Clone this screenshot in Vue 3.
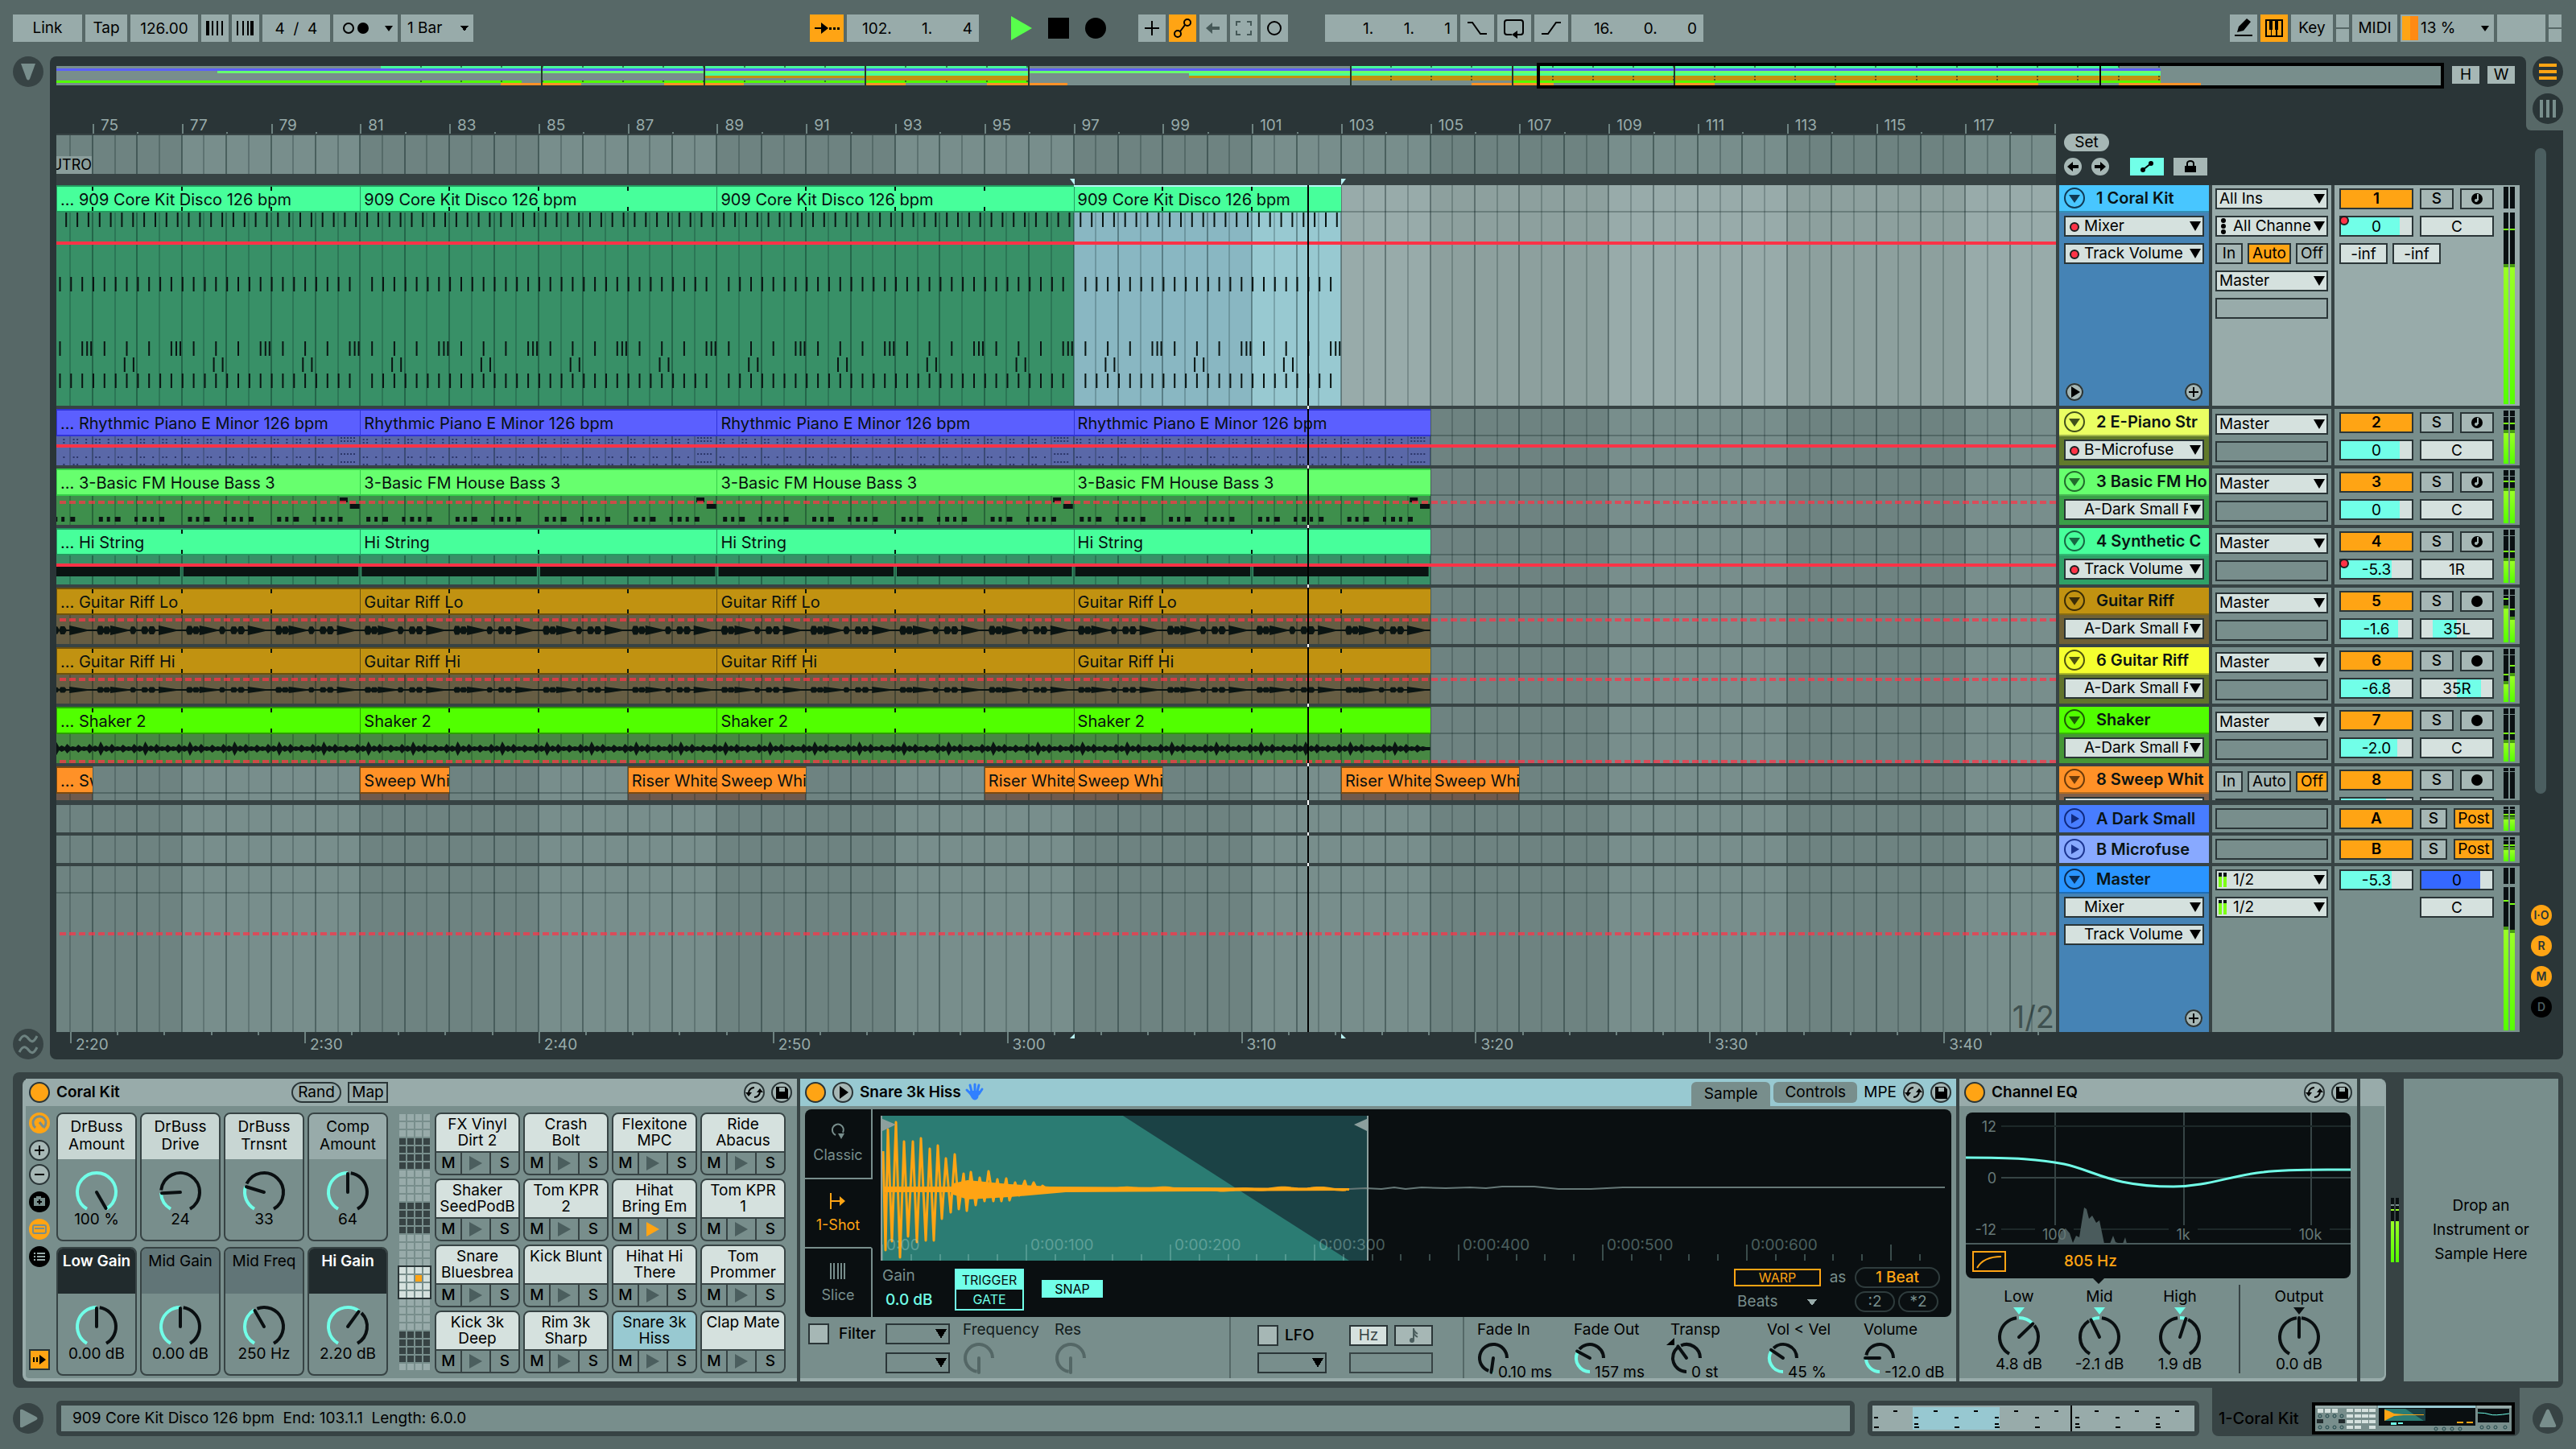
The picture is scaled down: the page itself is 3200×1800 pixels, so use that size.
<template>
    <div class="live">
        <header class="toolbar">
            <div class="group tempo-group">
                <button class="tb">Link</button>
                <button class="tb tap">Tap</button>
                <input class="tb tempo" type="text" value="126.00" aria-label="Tempo">
                <button class="tb nudge" aria-label="Nudge down">
                    <svg width="24" height="20" viewBox="0 0 24 20"><path d="M1 1h4v18H1zM8 1h2v18H8zM14 1h2v18h-2zM20 1h2v18h-2z" /></svg>
                </button>
                <button class="tb nudge" aria-label="Nudge up">
                    <svg width="24" height="20" viewBox="0 0 24 20"><path d="M1 1h2v18H1zM8 1h2v18H8zM14 1h2v18h-2zM18 1h4v18h-4z" /></svg>
                </button>
                <input class="tb signature" type="text" value="4  /  4" aria-label="Time signature">
                <button class="tb metronome" aria-label="Metronome">
                    <svg width="60" height="20" viewBox="0 0 60 20">
                        <circle cx="9" cy="10" r="6" fill="none" stroke="#000" stroke-width="2" />
                        <circle cx="27" cy="10" r="7" />
                        <path d="M54 7h10l-5 7z" />
                    </svg>
                </button>
                <select class="tb quantize" aria-label="Quantization">
                    <option>1 Bar</option>
                </select>
            </div>
            <div class="group transport">
                <button class="tb wide on" aria-label="Follow">
                    <svg width="32" height="20" viewBox="0 0 32 20"><path d="M1 9h8V3l9 7-9 7v-6H1zM19 9h3v3h-3zM24 9h3v3h-3zM29 9h3v3h-3z" /></svg>
                </button>
                <input class="tb position" type="text" value="102.       1.       4" aria-label="Arrangement position">
                <div class="play-buttons">
                    <button aria-label="Play"><svg width="26" height="30"><path d="M0 0l26 15L0 30z" fill="#58ff4c" /></svg></button>
                    <button aria-label="Stop"><svg width="26" height="26"><path d="M0 0h26v26H0z" /></svg></button>
                    <button aria-label="Record"><svg width="26" height="26"><circle cx="13" cy="13" r="13" /></svg></button>
                </div>
                <button class="tb nudge" aria-label="Overdub"><svg width="20" height="20"><path d="M10 1v18M1 10h18" class="ln" /></svg></button>
                <button class="tb nudge on" aria-label="Automation arm">
                    <svg width="24" height="26"><g class="ln"><circle cx="6" cy="20" r="4" /><circle cx="18" cy="6" r="4" /><path d="M9 17l6-8" /></g></svg>
                </button>
                <button class="tb nudge dim" aria-label="Re-enable automation"><svg width="20" height="20"><path d="M1 10l8-7v5h9v4H9v5z" /></svg></button>
                <button class="tb nudge dim" aria-label="Capture"><svg width="20" height="20"><path d="M1 7V2h5M14 2h5v5M19 13v5h-5M6 18H1v-5" class="ln" /></svg></button>
                <button class="tb nudge" aria-label="Session record"><svg width="20" height="20"><circle cx="10" cy="10" r="8" class="ln" /></svg></button>
                <input class="tb position loop-start" type="text" value="1.       1.       1" aria-label="Loop start">
                <button class="tb wide" aria-label="Punch in"><svg width="26" height="20"><path d="M1 3h6l10 14h8" class="ln" /></svg></button>
                <button class="tb wide" aria-label="Loop">
                    <svg width="28" height="26"><path d="M11 21H5a3 3 0 0 1-3-3V6a3 3 0 0 1 3-3h17a3 3 0 0 1 3 3v12a3 3 0 0 1-3 3h-5" class="ln" /><path d="M11 21l7-5v10z" /></svg>
                </button>
                <button class="tb wide" aria-label="Punch out"><svg width="26" height="20"><path d="M1 17h8L19 3h6" class="ln" /></svg></button>
                <input class="tb position" type="text" value="16.       0.       0" aria-label="Loop length">
            </div>
            <div class="group status-group">
                <button class="tb nudge" aria-label="Draw mode"><svg width="22" height="24"><path d="M3 17l2-7L15 0l5 4-9 11zM0 20h22v2H0z" /></svg></button>
                <button class="tb nudge on" aria-label="Computer MIDI keyboard">
                    <svg width="22" height="22"><path d="M1 1h20v20H1z" class="ln" /><path d="M5 2h4v11H5zM12 2h4v11h-4zM7 12h1v9H7zM13 12h2v9h-2z" /></svg>
                </button>
                <button class="tb key">Key</button>
                <span class="split"><i></i><i></i></span>
                <button class="tb midi">MIDI</button>
                <button class="tb cpu"><i class="load"></i>13 %<i class="caret"></i></button>
                <span class="tb disk"></span>
                <span class="split"><i></i><i></i></span>
            </div>
        </header>

        <main class="arrange">
            <aside class="side">
                <button class="disc" aria-label="Show browser"><svg width="22" height="24"><path d="M2 2h18L13 21q-2 3-4 0z" fill="#788e8c" /></svg></button>
                <button class="disc" aria-label="Groove pool"><svg width="26" height="30"><path d="M2 11c5-10 9-6 12-2s6 4 10-4M2 25c5-10 9-6 12-2s6 4 10-4" fill="none" stroke="#6d8280" stroke-width="3" /></svg></button>
            </aside>
            <section class="panel">
                <div class="overview-row">
                    <div class="overview">
                        <svg viewBox="0 0 2964 24" preserveAspectRatio="none" shape-rendering="crispEdges">
                            <rect v-for="(s, i) in overviewParts" :key="i" :x="s[1]" :y="s[0] * 3" :width="s[2] - s[1]" height="3" :fill="s[3]" />
                            <path :d="overviewTicks" stroke="#14302a" stroke-width="2" stroke-dasharray="2 2" opacity=".6" />
                            <path d="M603 0V24M805 0V24M1005 0V24M1208 0V24M1608 0V24M1809 0V24M2010 0V24" stroke="#24382c" stroke-width="2" />
                            <path d="M2539 0V24" stroke="#000" stroke-width="2" />
                        </svg>
                        <span class="viewport"></span>
                    </div>
                    <button class="zoom-btn">H</button>
                    <button class="zoom-btn">W</button>
                </div>

                <div class="ruler-row">
                    <div class="rulers">
                        <div class="bars">
                            <span v-for="b in rulerBars" :key="b" class="bar-no" :style="{ left: pct(b) }">{{ b < 119 ? b : '' }}</span>
                            <span v-for="b in 44" :key="'m' + b" class="bar-tick" :style="{ left: pct(b + 74) }"></span>
                        </div>
                        <div class="locators">
                            <svg class="fill" viewBox="0 0 2484 10" preserveAspectRatio="none" shape-rendering="crispEdges">
                                <path :d="shadePath" fill="#6e8381" />
                                <path :d="halfLines" stroke="rgba(0,20,20,.22)" stroke-width="2" />
                                <path :d="barLines" stroke="rgba(0,20,20,.38)" stroke-width="2" />
                            </svg>
                            <span class="locator"><span>OUTRO</span></span>
                        </div>
                        <div class="scrub">
                            <i class="loop-flag start" :style="{ left: pct(97) }"></i>
                            <i class="loop-flag end" :style="{ left: pct(103) }"></i>
                        </div>
                    </div>
                    <div class="set-box">
                        <button class="set">Set</button>
                        <div class="set-row">
                            <button class="mini-disc" aria-label="Previous locator"><svg width="16" height="14"><path d="M1 7l7-6v4h7v4H8v4z" /></svg></button>
                            <button class="mini-disc" aria-label="Next locator"><svg width="16" height="14"><path d="M15 7L8 1v4H1v4h7v4z" /></svg></button>
                            <button class="set-tool cyan" aria-label="Automation mode"><svg width="18" height="16"><circle cx="4" cy="12" r="3" /><circle cx="14" cy="4" r="3" /><path d="M4 12L14 4" class="ln" /></svg></button>
                            <button class="set-tool lock" aria-label="Lock envelopes"><svg width="16" height="16"><path d="M1 7h14v8H1z" /><path d="M4 7V4a4 3 0 0 1 8 0v3" class="ln" /></svg></button>
                        </div>
                    </div>
                </div>

                <div class="tracks">
                    <i class="playhead-gap" :style="{ left: `calc((100% - 576px) * ${(playBar - left) / span})` }"></i>
                    <div v-for="t in tracks" :key="t.id" class="track" :class="t.kind">
                        <div class="lane">
                            <svg class="fill" viewBox="0 0 2484 10" preserveAspectRatio="none" shape-rendering="crispEdges">
                                <path :d="shadePath" :fill="t.kind === 'tall' ? '#8da09e' : '#6e8381'" />
                            </svg>
                            <i v-if="t.kind !== 'return'" class="fold-line"></i>
                            <div v-for="c in t.clips" :key="c.from" class="clip" :style="clipStyle(c)">
                                <div class="clip-head" :style="{ background: t.clip, borderColor: t.edge }">
                                    {{ c.from < 75 ? '...' : '' }} {{ c.name || t.clipName }}
                                </div>
                                <div class="clip-body" :class="{ selected: c.selected }" :style="{ background: c.selected ? '' : t.clipBody }"></div>
                            </div>
                            <svg class="fill lines" viewBox="0 0 2484 10" preserveAspectRatio="none" shape-rendering="crispEdges">
                                <path :d="halfLines" stroke="rgba(0,20,20,.2)" stroke-width="2" />
                                <path :d="barLines" stroke="rgba(0,20,20,.34)" stroke-width="2" />
                            </svg>
                            <svg v-if="t.ticks" class="fill ticks" viewBox="0 0 2484 34" preserveAspectRatio="none" shape-rendering="crispEdges">
                                <path :d="t.ticks" stroke="#06140d" stroke-width="2" />
                            </svg>
                            <svg v-if="t.art" class="art" :class="t.kind" :viewBox="`0 0 2484 ${t.kind === 'tall' ? 240 : 36}`" preserveAspectRatio="none">
                                <path :d="t.art" :fill="t.ink || '#0a1412'" />
                            </svg>
                            <i v-if="t.line" class="automation" :class="{ dashed: t.dashed }" :style="{ top: t.line + 'px' }"></i>
                            <i v-if="t.kind === 'tall'" class="loop-edge" :style="{ left: pct(97), width: 6 / span * 100 + '%' }"></i>
                            <span v-if="t.kind === 'master'" class="grid-size">1/2</span>
                            <i class="playhead" :style="{ left: pct(playBar) }"></i>
                        </div>

                        <div class="head" :style="{ background: t.body }">
                            <div class="title" :style="{ background: t.color }">
                                <button class="fold" :aria-label="'Fold ' + t.name">
                                    <svg width="28" height="28">
                                        <circle cx="14" cy="14" r="12" fill="none" :stroke="t.dark" stroke-width="2" />
                                        <path :d="t.kind === 'return' ? 'M10 8v12l10-6z' : 'M7 10h14l-7 10z'" :fill="t.dark" />
                                    </svg>
                                </button>
                                <span>{{ t.name }}</span>
                            </div>
                            <div v-for="(d, i) in t.choosers" :key="i" class="pick">
                                <i v-if="t.armed" class="dot"></i>
                                <select :aria-label="t.name + ' envelope ' + (i + 1)"><option>{{ d }}</option></select>
                            </div>
                            <div v-if="t.foot" class="foot">
                                <button v-if="t.kind === 'tall'" aria-label="Play lane"><svg width="22" height="22"><path d="M7 4v14l11-7z" /></svg></button>
                                <button aria-label="Add lane"><svg width="22" height="22"><path d="M11 5v12M5 11h12" class="ln" /></svg></button>
                            </div>
                        </div>

                        <div class="io">
                            <template v-for="(o, i) in t.io" :key="i">
                                <div v-if="o === 'monitor'" class="monitor">
                                    <button class="mon-in">In</button>
                                    <button class="mon-auto" :class="{ lit: t.kind === 'tall' }">Auto</button>
                                    <button class="mon-off" :class="{ lit: t.kind !== 'tall' }">Off</button>
                                </div>
                                <div v-else-if="o" class="pick" :class="{ midi: o === 'All Channels', out: o === '1/2' }">
                                    <svg v-if="o === 'All Channels'" class="din" width="8" height="22"><circle cx="4" cy="4" r="3" /><circle cx="4" cy="11" r="3" /><circle cx="4" cy="18" r="3" /></svg>
                                    <span v-if="o === '1/2'" class="out-meter"><i></i><i></i></span>
                                    <select :aria-label="t.name + ' routing ' + (i + 1)"><option>{{ o }}</option></select>
                                </div>
                                <div v-else class="blank"></div>
                            </template>
                        </div>

                        <div class="mix">
                            <div class="controls">
                                <div v-if="t.kind !== 'master'" class="mix-row">
                                    <button class="activator">{{ t.no }}</button>
                                    <button class="sq solo">S</button>
                                    <button v-if="t.kind === 'return'" class="sq post lit">Post</button>
                                    <button v-else class="sq arm" :aria-label="'Arm ' + t.name">
                                        <svg width="16" height="16"><circle cx="8" cy="8" r="7" /><path v-if="t.midi" d="M9 2v8" fill="none" stroke="#a6b7b5" stroke-width="2" /><circle v-if="t.midi" cx="7" cy="10" r="2" fill="#a6b7b5" /></svg>
                                    </button>
                                </div>
                                <div v-if="t.vol" class="mix-row">
                                    <input class="field vol" type="text" :value="t.vol" :aria-label="t.name + ' volume'" :style="{ background: bar(0, t.volFill) }">
                                    <i v-if="t.volDot" class="vol-dot"></i>
                                    <input v-if="t.kind === 'master'" class="field vol cue" type="text" value="0" aria-label="Cue volume">
                                    <input v-else class="field vol" type="text" :value="t.pan" :aria-label="t.name + ' pan'" :style="{ background: bar(...(t.panFill || [0, 0])) }">
                                </div>
                                <div v-if="t.kind === 'master'" class="mix-row end"><input class="field vol" type="text" value="C" aria-label="Master pan"></div>
                                <div v-if="t.kind === 'tall'" class="mix-row sends">
                                    <input class="field" type="text" value="-inf" aria-label="Send A">
                                    <input class="field" type="text" value="-inf" aria-label="Send B">
                                </div>
                            </div>
                            <div class="meter" :style="{ '--tone': t.kind === 'tall' ? '#98abaa' : '#788e8c' }">
                                <span v-for="(m, i) in t.meter" :key="i"><i v-if="m" class="peak" :style="{ bottom: m + 17 + '%' }"></i><i class="level" :class="{ empty: !m }" :style="{ height: m + '%' }"></i></span>
                            </div>
                        </div>
                    </div>
                </div>

                <div class="time-ruler">
                    <div class="times">
                        <span v-for="(s, i) in times" :key="s" class="time" :style="{ left: (17 + i * 290.9) / 24.84 + '%' }">{{ s }}</span>
                        <i v-for="n in 42" :key="n" class="time-tick" :style="{ left: (17 + n * 58.18) / 24.84 + '%' }"></i>
                        <i class="loop-flag start" :style="{ left: pct(97) }"></i>
                        <i class="loop-flag end" :style="{ left: pct(103) }"></i>
                    </div>
                </div>
            </section>
            <aside class="rail">
                <div class="views">
                    <button class="disc" aria-label="Arrangement view"><svg width="22" height="20"><path d="M0 0h22v4H0zM0 8h22v4H0zM0 16h22v4H0z" fill="#ffa414" /></svg></button>
                    <button class="disc" aria-label="Session view"><svg width="20" height="22"><path d="M0 0h4v22H0zM8 0h4v22H8zM16 0h4v22h-4z" fill="#788e8c" /></svg></button>
                </div>
                <div class="scroll">
                    <i class="thumb"></i>
                    <div class="section-buttons">
                        <button class="lit">I·O</button>
                        <button class="lit">R</button>
                        <button class="lit">M</button>
                        <button>D</button>
                    </div>
                </div>
            </aside>
        </main>

        <section class="devices">
            <article class="device rack">
                <div class="device-head">
                    <button class="power" aria-label="Rack on"></button>
                    <h2>Coral Kit</h2>
                    <button class="pill rand">Rand</button>
                    <button class="pill map">Map</button>
                    <span class="push"></span>
                    <button class="tool" aria-label="Hot swap"><svg width="22" height="22"><path :d="swapIcon" class="ln" /><path :d="swapArrows" /></svg></button>
                    <button class="tool" aria-label="Save preset"><svg width="22" height="22"><path :d="saveIcon" fill-rule="evenodd" /></svg></button>
                </div>
                <div class="device-body rack-body">
                    <div class="rack-side">
                        <button aria-label="Show macros"><svg width="26" height="26"><circle cx="13" cy="13" r="13" fill="#ffa414" /><path d="M8 19a8 8 0 1 1 10 0M13 12l5 6" fill="none" stroke="#788e8c" stroke-width="3" /></svg></button>
                        <button class="plus" aria-label="Add macro"><svg width="26" height="26"><circle cx="13" cy="13" r="12" fill="#a6b7b5" stroke="#2a3537" stroke-width="2" /><path d="M13 7v12M7 13h12" class="ln" /></svg></button>
                        <button class="minus" aria-label="Remove macro"><svg width="26" height="26"><circle cx="13" cy="13" r="12" fill="#a6b7b5" stroke="#2a3537" stroke-width="2" /><path d="M7 13h12" class="ln" /></svg></button>
                        <button aria-label="Macro variations"><svg width="26" height="26"><circle cx="13" cy="13" r="13" /><path d="M6 8h3V6h6v2h5v10H6z" fill="#788e8c" /><path d="M13 10v6M10 13h6" class="ln" /></svg></button>
                        <button aria-label="Show devices"><svg width="26" height="26"><circle cx="13" cy="13" r="13" fill="#ffa414" /><rect x="5" y="8" width="16" height="10" rx="2" fill="#ffa414" stroke="#788e8c" stroke-width="2" /><path d="M7 12h12" stroke="#788e8c" stroke-width="2" /></svg></button>
                        <button aria-label="Show chains"><svg width="26" height="26"><circle cx="13" cy="13" r="13" /><path d="M6 8h2v2H6zM10 8h10v2H10zM6 12h2v2H6zM10 12h10v2H10zM6 16h2v2H6zM10 16h10v2H10z" fill="#98abaa" /></svg></button>
                        <button class="auto-select" aria-label="Auto select"><svg width="22" height="22"><path d="M3 8h2v6H3zM7 8h2v6H7zM11 5l8 6-8 6z" /></svg></button>
                    </div>
                    <div class="macros">
                        <div v-for="m in macros" :key="m.name" class="macro">
                            <div class="macro-name" :class="m.tone">{{ m.name }}</div>
                            <label class="knob big">
                                <input type="range" :aria-label="m.name">
                                <svg width="56" height="52" viewBox="-28 -27 56 52">
                                    <path :d="arc(24, Math.min(m.angle + 9, 150), 150)" class="track-arc" />
                                    <path :d="arc(24, -150, m.angle)" class="value-arc" />
                                    <path :d="needle(23, m.angle)" class="needle" />
                                </svg>
                                <span>{{ m.value }}</span>
                            </label>
                        </div>
                    </div>
                    <div class="pad-map">
                        <i v-for="n in 128" :key="n" :class="mapCell(n - 1)"></i>
                        <span class="map-frame"></span>
                    </div>
                    <div class="pads">
                        <div v-for="p in pads" :key="p" class="pad">
                            <div class="pad-name" :class="{ current: p === 'Snare 3k\nHiss' }">{{ p }}</div>
                            <div class="pad-row">
                                <button>M</button>
                                <button aria-label="Preview"><svg width="16" height="18"><path d="M0 0l16 9-16 9z" :fill="p === 'Hihat\nBring Em' ? '#ffa414' : '#4b5e5e'" /></svg></button>
                                <button>S</button>
                            </div>
                        </div>
                    </div>
                </div>
            </article>

            <article class="device sampler">
                <div class="device-head chosen">
                    <button class="power" aria-label="Simpler on"></button>
                    <button class="tool" aria-label="Unfold"><svg width="22" height="22"><path d="M7 3v16l11-8z" /></svg></button>
                    <h2>Snare 3k Hiss</h2>
                    <svg class="hand" width="22" height="22" viewBox="0 0 22 22"><path d="M5 12L1 8M7 10L5 2M11 10V1M14 10l2-8M16 13l4-6" stroke="#3080ff" stroke-width="3" stroke-linecap="round" /><path d="M5 9h12l-2 9q-4 5-8 0L3 11z" fill="#3080ff" /></svg>
                    <span class="push"></span>
                    <button class="tab front">Sample</button>
                    <button class="tab">Controls</button>
                    <span class="mpe">MPE</span>
                    <button class="tool" aria-label="Hot swap"><svg width="22" height="22"><path :d="swapIcon" class="ln" /><path :d="swapArrows" /></svg></button>
                    <button class="tool" aria-label="Save preset"><svg width="22" height="22"><path :d="saveIcon" fill-rule="evenodd" /></svg></button>
                </div>
                <div class="device-body sampler-body">
                    <div class="display">
                        <div class="modes">
                            <button><svg width="22" height="22"><path d="M8 16a7 7 0 1 1 9-3" fill="none" stroke="currentColor" stroke-width="2" /><path d="M11 14h8l-4 7z" fill="currentColor" /></svg>Classic</button>
                            <button class="lit"><svg width="22" height="22"><path d="M2 1v20M3 11h12" stroke="currentColor" stroke-width="2" /><path d="M13 5l7 6-7 6z" fill="currentColor" /></svg>1-Shot</button>
                            <button><svg width="22" height="22"><path d="M2 1v20M6 1v20M11 1v20M15 1v20M19 1v20" stroke="currentColor" stroke-width="2" /></svg>Slice</button>
                        </div>
                        <div class="wave-side">
                            <div class="wave">
                                <svg viewBox="0 0 1324 180" preserveAspectRatio="none">
                                    <path d="M2 0H604V180H2z" fill="#1b4245" />
                                    <path d="M2 0H301L582 180H2z" fill="#2b7c73" />
                                    <path :d="sampleTicks" stroke="#a8d8d0" stroke-width="2" opacity=".3" shape-rendering="crispEdges" />
                                    <path d="M582 91l20-1 20 1 16-2 14 2 20-2 30 1 30-1 20 1 20-2 40 0 30 3 40 0 40-2 400 0" fill="none" stroke="#667877" stroke-width="2" />
                                    <path :d="sampleWave" fill="none" stroke="#ffa414" stroke-width="3" stroke-linejoin="round" />
                                    <path d="M4 88H90V95H4zM90 84L108 80 160 85 210 88 582 90v3L230 95 160 101 108 104 90 98z" fill="#ffa414" />
                                    <path d="M1 0V180M605 0V180" stroke="#8c9f9d" stroke-width="2" />
                                    <path d="M0 3L19 11 0 20zM606 3L588 11 606 20z" fill="#8c9f9d" />
                                </svg>
                                <span v-for="(s, i) in sampleTimes" :key="s" class="sample-time" :style="{ left: (7 + i * 179) / 13.24 + '%' }">{{ s }}</span>
                            </div>
                            <div class="wave-foot">
                                <label class="gain">Gain<input type="text" value="0.0 dB"></label>
                                <div class="trigger"><button class="lit">TRIGGER</button><button>GATE</button></div>
                                <button class="snap">SNAP</button>
                                <span class="push"></span>
                                <div class="warp-box">
                                    <button class="warp">WARP</button><span>as</span><button class="round beat">1 Beat</button>
                                    <select class="beats" aria-label="Warp mode"><option>Beats</option></select><span></span>
                                    <div class="halves"><button class="round">:2</button><button class="round">*2</button></div>
                                </div>
                            </div>
                        </div>
                    </div>
                    <div class="sampler-foot">
                        <label class="check"><input type="checkbox">Filter</label>
                        <div class="stack">
                            <select aria-label="Filter type"><option></option></select>
                            <select aria-label="Filter circuit"><option></option></select>
                        </div>
                        <label v-for="k in ['Frequency', 'Res']" :key="k" class="knob small off">
                            {{ k }}
                            <input type="range" disabled>
                            <svg width="40" height="40" viewBox="-20 -20 40 40"><path :d="arc(17, -172, 90)" class="track-arc" /><path d="M0 0V18" class="needle" /></svg>
                        </label>
                        <i class="rule first"></i>
                        <div class="lfo">
                            <label class="check"><input type="checkbox">LFO</label>
                            <button class="hz lit">Hz</button>
                            <button class="hz" aria-label="Sync"><svg width="12" height="20"><circle cx="4" cy="16" r="3" fill="#4b5e5e" /><path d="M6 16V1q0 4 5 7M6 5q0 4 5 7" fill="none" stroke="#4b5e5e" stroke-width="2" /></svg></button>
                            <select aria-label="LFO wave"><option></option></select>
                            <span class="rate"></span>
                        </div>
                        <i class="rule second"></i>
                        <label v-for="k in sampleKnobs" :key="k.name" class="knob small">
                            {{ k.name }}
                            <input type="range">
                            <svg width="40" height="40" viewBox="-20 -20 40 40">
                                <path :d="arc(17, k.angle + 12, 90)" class="track-arc" />
                                <path :d="arc(17, -180, k.angle - 3)" :class="k.plain ? 'track-arc' : 'value-arc'" />
                                <path :d="needle(18, k.angle)" class="needle" />
                                <path v-if="k.plain" d="M-25 -16l10-9v9z" />
                            </svg>
                            <span>{{ k.value }}</span>
                        </label>
                    </div>
                </div>
            </article>

            <article class="device eq">
                <div class="device-head">
                    <button class="power" aria-label="Channel EQ on"></button>
                    <h2>Channel EQ</h2>
                    <span class="push"></span>
                    <button class="tool" aria-label="Hot swap"><svg width="22" height="22"><path :d="swapIcon" class="ln" /><path :d="swapArrows" /></svg></button>
                    <button class="tool" aria-label="Save preset"><svg width="22" height="22"><path :d="saveIcon" fill-rule="evenodd" /></svg></button>
                </div>
                <div class="device-body eq-body">
                    <div class="eq-display">
                        <svg class="eq-graph" viewBox="0 0 478 164">
                            <path d="M111 0V140M271 0V140M429 0V140" stroke="#364445" stroke-width="2" />
                            <path d="M44 81H478" stroke="#364445" stroke-width="2" />
                            <path d="M44 17H478M44 145H86M134 145H252M288 145H404M452 145H478" stroke="#1d2829" stroke-width="2" />
                            <path d="M114 162l4-14 6-4 5 6 4 12 4-9 4 2 3-19 3-18 3 2 3 12 4-4 5 9 4-3 6 29 7 0 4-10 3 8 3 1 6 1 3-8 2 8z" fill="#4a5b5c" />
                            <path d="M0 163H478" stroke="#4a5b5c" stroke-width="2" />
                            <path d="M0 56C60 56 92 58 122 64C160 72 180 92 258 92C300 92 330 78 370 74C400 70 440 71 478 71" fill="none" stroke="#71ffe8" stroke-width="3" />
                            <g class="eq-text">
                                <text x="38" y="24" text-anchor="end">12</text>
                                <text x="38" y="88" text-anchor="end">0</text>
                                <text x="38" y="152" text-anchor="end">-12</text>
                                <text x="110" y="158" text-anchor="middle">100</text>
                                <text x="270" y="158" text-anchor="middle">1k</text>
                                <text x="428" y="158" text-anchor="middle">10k</text>
                            </g>
                        </svg>
                        <div class="eq-foot">
                            <button aria-label="High-pass"><svg width="38" height="22"><path d="M4 19Q12 5 34 5" fill="none" stroke="#ffa414" stroke-width="2" /></svg></button>
                            <span>805 Hz</span>
                        </div>
                        <i class="pointer"></i>
                    </div>
                    <div class="eq-knobs">
                        <template v-for="k in eqKnobs" :key="k.name">
                            <i v-if="k.name === 'Output'" class="rule"></i>
                            <label class="knob eqk">
                                {{ k.name }}
                                <input type="range">
                                <svg width="56" height="62" viewBox="-28 -37 56 62">
                                    <path d="M-7 -37h14l-7 9z" :fill="k.plain ? '#0a0f11' : '#71ffe8'" />
                                    <path :d="arc(24, -150, Math.min(k.angle, 0) - 7) + arc(24, Math.max(k.angle, 0) + 7, 150)" class="track-arc" />
                                    <path :d="arc(24, Math.min(k.angle, 0), Math.max(k.angle, 0))" class="value-arc" />
                                    <path :d="needle(24, k.angle)" class="needle" />
                                </svg>
                                <span>{{ k.value }}</span>
                            </label>
                        </template>
                    </div>
                </div>
            </article>

            <div class="stub"><i></i></div>
            <div class="chain-meter"><span></span><span></span></div>
            <div class="drop">Drop an Instrument or Sample Here</div>
        </section>

        <footer class="status">
            <button class="disc" aria-label="Show info view"><svg width="24" height="24"><path d="M2 2q0-2 3-1l17 9q3 2 0 4L5 23q-3 1-3-1z" fill="#788e8c" /></svg></button>
            <div class="message"><p>909 Core Kit Disco 126 bpm&nbsp; End: 103.1.1&nbsp; Length: 6.0.0</p></div>
            <div class="clip-view">
                <svg viewBox="0 0 400 32" preserveAspectRatio="none" shape-rendering="crispEdges">
                    <path d="M0 0H400V32H0z" fill="#98abaa" />
                    <path d="M50 2H158V30H50z" fill="#97c8d1" />
                    <path :d="clipDots" />
                    <path d="M246 0h2V32h-2z" />
                </svg>
            </div>
            <div class="track-tab">
                <span>1-Coral Kit</span>
                <svg viewBox="0 0 244 32" preserveAspectRatio="none">
                    <path d="M0 0H244V32H0z" fill="#788e8c" />
                    <path d="M0 0H76V3H0zM201 0H244V3H201z" fill="#98abaa" /><path d="M78 0H199V3H78z" fill="#97c8d1" />
                    <path d="M79 3H199V25H79z" fill="#0a0f11" /><path d="M86 4H137V19H86z" fill="#1b4245" /><path d="M86 4H112L135 19H86z" fill="#2b7c73" />
                    <path d="M86 5l6 2 6 3 12 1h25v1h-25l-12 1-6 3-6 3z" fill="#ffa414" />
                    <path d="M94 21h7v3h-7zM103 21h6v2h-6z" fill="#71ffe8" /><path d="M176 20h8v2h-8zM188 20h8v2h-8z" fill="#ffa414" />
                    <path d="M202 4H241V21H202z" fill="#0a0f11" /><path d="M202 9q10 0 15 2t24-1" fill="none" stroke="#71ffe8" />
                    <path d="M3 4h7v5H3zM12 4h7v5h-7zM21 4h7v5h-7zM39 4h8v4h-8zM49 4h8v4h-8zM58 4h8v4h-8zM67 4h8v4h-8zM39 11h8v4h-8zM49 11h8v4h-8zM58 11h8v4h-8zM67 11h8v4h-8zM39 18h8v4h-8zM49 18h8v4h-8zM58 18h8v4h-8zM67 18h8v4h-8zM39 25h8v4h-8zM49 25h8v4h-8zM67 25h8v4h-8z" fill="#d5e1de" />
                    <path d="M2 17h8v5H2zM29 17h8v5h-8z" fill="#212b2d" />
                    <g fill="none" stroke="#20474a"><circle cx="6" cy="13" r="2" /><circle cx="15" cy="13" r="2" /><circle cx="24" cy="13" r="2" /><circle cx="33" cy="13" r="2" /><circle cx="6" cy="27" r="2" /><circle cx="15" cy="27" r="2" /><circle cx="24" cy="27" r="2" /><circle cx="33" cy="27" r="2" /><circle cx="150" cy="29" r="2" /><circle cx="160" cy="29" r="2" /><circle cx="170" cy="29" r="2" /><circle cx="180" cy="29" r="2" /><circle cx="207" cy="27" r="2" /><circle cx="215" cy="27" r="2" /><circle cx="224" cy="27" r="2" /><circle cx="236" cy="27" r="2" /></g>
                </svg>
            </div>
            <button class="disc" aria-label="Hide device view"><svg width="24" height="24"><path d="M10 2q2-3 4 0l8 18q1 3-2 3H4q-3 0-2-3z" fill="#788e8c" /></svg></button>
        </footer>
    </div>
</template>

<script setup>
// The lane is 2484 units wide, bar 75 sits 45 units in
const barWidth = 55.39;
const span = 2484 / barWidth;
const left = 75 - 45 / barWidth;
const playBar = 102.24;

const x = (bar) => 45 + (bar - 75) * barWidth;
const pct = (bar) => `${((bar - left) / span) * 100}%`;

const clipStyle = (c) => ({
    left: pct(Math.max(c.from, left)),
    width: `${((c.to - Math.max(c.from, left)) / span) * 100}%`
});

const rulerBars = Array.from({ length: 23 }, (_, i) => 75 + i * 2);
const times = ['2:20', '2:30', '2:40', '2:50', '3:00', '3:10', '3:20', '3:30', '3:40'];

let barLines = '';
let halfLines = '';
for (let b = 74.5; b < 119; b += 0.5) {
    const line = `M${Math.round(x(b))} 0V10`;
    if (Number.isInteger(b)) barLines += line;
    else halfLines += line;
}

let shadePath = '';
for (let b = 73; b < 119; b += 8) shadePath += `M${x(b)} 0H${x(b + 4)}V10H${x(b)}z`;

const headTicks = (from, to, step) => {
    let d = '';
    for (let b = from; b < to; b += step) {
        if ((b - 81) % 8) d += `M${Math.round(x(b))} 2v5M${Math.round(x(b))} 27v5`;
    }
    return d;
};

const box = (bx, y, w, h) => `M${bx.toFixed(1)} ${y}h${w}v${h}h-${w}z`;

// Drum clip: five rows of hits
const drumArt = () => {
    let d = '';
    for (let b = 74; b < 103; b += 0.25) {
        d += box(x(b + 0.14), 0, 2, 18);
        if ((b - 81) % 8) {
            d += box(x(b), 80, 2, 18) + box(x(b), 200, 2, 18);
        }
    }
    for (let b = 74.25; b < 103; b += 0.5) d += box(x(b), 160, 2, 18);
    for (let b = 73; b < 103; b += 2) {
        for (const o of [1.86, 1.95]) if (b + o < 103) d += box(x(b + o), 160, 2, 18);
        for (const o of [0.7, 0.9]) d += box(x(b + o), 180, 2, 18);
    }
    return d;
};

const pianoArt = () => {
    let d = '';
    for (let b = 74; b < 105; b += 1) {
        const last = (b - 81 + 16) % 8 === 7;
        if (last) {
            for (let i = 0; i < 5; i++) {
                for (const y of [1, 5, 21, 31]) d += box(x(b + 0.56) + i * 4, y, 2, 2);
            }
        }
        for (const o of [0.06, 0.14, 0.34, 0.56, 0.64, 0.84]) {
            if (last && o > 0.5) continue;
            for (const y of [3, 7, 25, 34]) d += box(x(b + o), y, 2, 2);
        }
    }
    return d;
};

const bassArt = () => {
    let d = '';
    for (let b = 73; b < 105; b += 2) {
        for (const [o, w] of [[0.14, 5], [0.32, 4], [0.5, 7], [0.94, 4], [1.12, 5], [1.3, 4], [1.5, 6]]) d += box(x(b + o), 26, w, 6);
    }
    for (const b of [73, 81, 89, 97]) d += box(x(b + 7.54), 2, 10, 6) + box(x(b + 7.77), 10, 12, 6);
    return d;
};

const stringArt = () => {
    let d = '';
    for (const b of [73, 77, 81, 85, 89, 93, 97, 101]) d += box(x(b) + 2, 14, barWidth * 4 - 4, 12);
    return d;
};

const guitarArt = (amp) => {
    const c = 19;
    let d = `M0 ${c - 1}H${x(105)}v2H0z`;
    for (let b = 73; b < 105; b += 2) {
        for (const [o, w, k, taper] of [[5, 10, 0.9], [13, 10, 0.8], [22, 22, 1, 1], [46, 9, 0.8], [60, 10, 0.8], [69, 10, 0.85], [82, 22, 1, 1]]) {
            const s = x(b) + o;
            const a = amp * k;
            if (taper) d += `M${s} ${c - a}Q${s + w / 2} ${c - a * 0.6} ${s + w} ${c - 1}v2Q${s + w / 2} ${c + a * 0.6} ${s} ${c + a}z`;
            else d += `M${s} ${c}L${s + 2} ${c - a}H${s + w - 3}L${s + w} ${c}L${s + w - 3} ${c + a}H${s + 2}z`;
        }
    }
    return d;
};

const shakerArt = () => {
    const c = 18;
    const spikes = [4, 9, 4, 6, 3, 5, 3, 6];
    let d = `M0 ${c - 2}H${x(105)}v4H0z`;
    let i = 0;
    for (let s = x(74); s < x(105) - 6; s += 6.93) {
        const a = spikes[i++ % 8];
        d += `M${s} ${c - 2}L${s + 3} ${c - a}L${s + 7} ${c - 2}V${c + 2}L${s + 3} ${c + a}L${s} ${c + 2}z`;
    }
    return d;
};

const loops = (to) => [
    { from: 73, to: 81 },
    { from: 81, to: 89 },
    { from: 89, to: 97 },
    { from: 97, to }
];

const tracks = [
    {
        id: 1, no: '1', name: '1 Coral Kit', kind: 'tall', color: '#48c6ff', body: '#4583b5', dark: '#103a55', armed: true, foot: true,
        choosers: ['Mixer', 'Track Volume'], io: ['All Ins', 'All Channels', 'monitor', 'Master', ''],
        vol: '0', volFill: 83, volDot: true, pan: 'C', midi: true, meter: [63, 63],
        clip: '#47ff9b', edge: '#259a60', clipBody: '#389067', clipName: '909 Core Kit Disco 126 bpm',
        clips: loops(103).map((c) => ({ ...c, selected: c.from === 97 })), ticks: headTicks(75, 103, 2), art: drumArt(), line: 70
    },
    {
        id: 2, no: '2', name: '2 E-Piano Str', kind: 'normal', color: '#eaff63', body: '#617a2b', dark: '#42501c', armed: true,
        choosers: ['B-Microfuse'], io: ['Master', ''], vol: '0', volFill: 83, pan: 'C', midi: true, meter: [58, 58],
        clip: '#5b5fff', edge: '#3033d8', clipBody: '#5a68a8', clipName: 'Rhythmic Piano E Minor 126 bpm',
        clips: loops(105), art: pianoArt(), ink: '#2b3569', line: 44
    },
    {
        id: 3, no: '3', name: '3 Basic FM Ho', kind: 'normal', color: '#67ff6e', body: '#3a9f48', dark: '#226b2c',
        choosers: ['A-Dark Small Room'], io: ['Master', ''], vol: '0', volFill: 83, pan: 'C', midi: true, meter: [60, 60],
        clip: '#67ff6e', edge: '#36cf49', clipBody: '#3e8f4c', clipName: '3-Basic FM House Bass 3',
        clips: loops(105), art: bassArt(), line: 40, dashed: true
    },
    {
        id: 4, no: '4', name: '4 Synthetic C', kind: 'normal', color: '#47ff9b', body: '#2fa167', dark: '#176742', armed: true,
        choosers: ['Track Volume'], io: ['Master', ''], vol: '-5.3', volFill: 72, volDot: true, pan: '1R', midi: true, meter: [41, 41],
        clip: '#47ff9b', edge: '#259a60', clipBody: '#389067', clipName: 'Hi String',
        clips: loops(105), ticks: headTicks(77, 105, 4), art: stringArt(), line: 44
    },
    {
        id: 5, no: '5', name: 'Guitar Riff', kind: 'normal', color: '#c19211', body: '#6f6136', dark: '#3a2c07',
        choosers: ['A-Dark Small Room'], io: ['Master', ''], vol: '-1.6', volFill: 81, pan: '35L', panFill: [16, 50], meter: [63, 43],
        clip: '#c19211', edge: '#6d520c', clipBody: '#665d43', clipName: 'Guitar Riff Lo',
        clips: loops(105), ticks: headTicks(75, 105, 2), art: guitarArt(6), line: 38, dashed: true
    },
    {
        id: 6, no: '6', name: '6 Guitar Riff', kind: 'normal', color: '#f5ff2f', body: '#61742c', dark: '#4f5210',
        choosers: ['A-Dark Small Room'], io: ['Master', ''], vol: '-6.8', volFill: 68, pan: '35R', panFill: [50, 84], meter: [33, 49],
        clip: '#c19211', edge: '#6d520c', clipBody: '#665d43', clipName: 'Guitar Riff Hi',
        clips: loops(105), ticks: headTicks(75, 105, 2), art: guitarArt(4), line: 38, dashed: true
    },
    {
        id: 7, no: '7', name: 'Shaker', kind: 'normal', color: '#51ff00', body: '#459736', dark: '#1b5c05',
        choosers: ['A-Dark Small Room'], io: ['Master', ''], vol: '-2.0', volFill: 79, pan: 'C', meter: [35, 35],
        clip: '#51ff00', edge: '#2ba000', clipBody: '#478843', clipName: 'Shaker 2',
        clips: loops(105), ticks: headTicks(75, 105, 2), art: shakerArt(), line: 66, dashed: true
    },
    {
        id: 8, no: '8', name: '8 Sweep Whit', kind: 'cut', color: '#ff9127', body: '#80604a', dark: '#6b3a0a',
        choosers: ['A-Dark Small Room'], io: ['monitor', ''], vol: '-9.0', volFill: 64, pan: 'C', meter: [0, 0],
        clip: '#ff9127', edge: '#7a4a12', clipBody: '#6f5a4d', clipName: 'Sweep White',
        clips: [
            { from: 73, to: 75 },
            { from: 81, to: 83 },
            { from: 87, to: 89, name: 'Riser White' },
            { from: 89, to: 91 },
            { from: 95, to: 97, name: 'Riser White' },
            { from: 97, to: 99 },
            { from: 103, to: 105, name: 'Riser White' },
            { from: 105, to: 107 }
        ]
    },
    { id: 9, no: 'A', name: 'A Dark Small', kind: 'return', color: '#487dff', body: '#487dff', dark: '#102a80', choosers: [], io: [''], meter: [48, 48] },
    { id: 10, no: 'B', name: 'B Microfuse', kind: 'return', color: '#88a9ff', body: '#88a9ff', dark: '#1c3590', choosers: [], io: [''], meter: [48, 48] },
    {
        id: 11, name: 'Master', kind: 'master', color: '#2a95ff', body: '#4583b5', dark: '#0b2c55', foot: true,
        choosers: ['Mixer', 'Track Volume'], io: ['1/2', '1/2'], vol: '-5.3', volFill: 72, meter: [62, 60], line: 82, dashed: true
    }
];

const bar = (from, to) => `linear-gradient(90deg, #d5e1de ${from}%, #71ffe8 ${from}%, #71ffe8 ${to}%, #d5e1de ${to}%)`;

// Overview rows: [row, start, end, colour]
const overviewParts = [
    [0, 403, 1208, '#47ff9b'], [0, 1608, 2562, '#47ff9b'],
    [1, 0, 2678, '#5b5fff'],
    [2, 200, 2678, '#67ff6e'],
    [3, 805, 1208, '#47ff9b'], [3, 1407, 2614, '#47ff9b'],
    [4, 805, 1208, '#c19211'], [4, 1407, 2614, '#c19211'],
    [5, 1005, 1208, '#c19211'], [5, 1608, 2614, '#c19211'],
    [6, 0, 578, '#51ff00'], [6, 603, 1208, '#51ff00'], [6, 1809, 2614, '#51ff00'],
    [7, 552, 652, '#ff9127'], [7, 755, 854, '#ff9127'], [7, 1005, 1055, '#ff9127'], [7, 1156, 1256, '#ff9127'],
    [7, 1758, 1860, '#ff9127'], [7, 2010, 2060, '#ff9127'], [7, 2210, 2462, '#ff9127'], [7, 2562, 2664, '#ff9127']
].map((part) => [part[0], part[1], part[2] === 2678 ? 2614 : part[2], part[3]]);

let overviewTicks = '';
for (let px = 453; px < 1208; px += 50.2) overviewTicks += `M${Math.round(px)} 0v3M${Math.round(px)} 18v3`;
for (let px = 1658; px < 2614; px += 50.2) overviewTicks += `M${Math.round(px)} 0v3M${Math.round(px)} 12v6`;

// Angles in degrees, clockwise from twelve o'clock
const point = (r, a) => {
    const t = (a * Math.PI) / 180;
    return `${(Math.sin(t) * r).toFixed(2)} ${(-Math.cos(t) * r).toFixed(2)}`;
};
const arc = (r, from, to) => (to > from ? `M${point(r, from)}A${r} ${r} 0 ${to - from > 180 ? 1 : 0} 1 ${point(r, to)}` : '');
const needle = (r, a) => `M0 0L${point(r, a)}`;

const macros = [
    { name: 'DrBuss Amount', value: '100 %', angle: 150, tone: 'pale' },
    { name: 'DrBuss Drive', value: '24', angle: -93, tone: 'pale' },
    { name: 'DrBuss Trnsnt', value: '33', angle: -73, tone: 'pale' },
    { name: 'Comp Amount', value: '64', angle: 0, tone: 'mid' },
    { name: 'Low Gain', value: '0.00 dB', angle: 0, tone: 'black' },
    { name: 'Mid Gain', value: '0.00 dB', angle: 0, tone: 'slate' },
    { name: 'Mid Freq', value: '250 Hz', angle: -30, tone: 'slate' },
    { name: 'Hi Gain', value: '2.20 dB', angle: 36, tone: 'black' }
];

const pads = [
    'FX Vinyl\nDirt 2', 'Crash\nBolt', 'Flexitone\nMPC', 'Ride\nAbacus',
    'Shaker\nSeedPodB', 'Tom KPR\n2', 'Hihat\nBring Em', 'Tom KPR\n1',
    'Snare\nBluesbrea', 'Kick Blunt', 'Hihat Hi\nThere', 'Tom\nPrommer',
    'Kick 3k\nDeep', 'Rim 3k\nSharp', 'Snare 3k\nHiss', 'Clap Mate'
];

const mapCell = (n) => {
    const row = Math.floor(n / 4);
    if (n === 82) return 'hot';
    if (row >= 19 && row <= 22) return 'white';
    return (row >= 3 && row <= 6) || (row >= 11 && row <= 14) || (row >= 27 && row <= 30) ? 'dark' : '';
};

const sampleTimes = ['0:00', '0:00:100', '0:00:200', '0:00:300', '0:00:400', '0:00:500', '0:00:600'];
let sampleTicks = '';
for (let i = 0; i < 37; i++) sampleTicks += `M${Math.round(2 + i * 35.8)} ${i % 5 ? 172 : 160}V180`;

const peaks = [[9, 17], [19, 8], [29, 32], [40, 32], [50, 28], [61, 41], [71, 37], [81, 53], [92, 48], [103, 72], [112, 70], [123, 77], [134, 69], [145, 79], [156, 78], [167, 83], [179, 81], [190, 83], [201, 87]];
const dips = [[6, 167], [14, 156], [24, 176], [34, 150], [45, 157], [56, 155], [66, 155], [76, 128], [87, 120], [97, 116], [107, 118], [118, 111], [129, 106], [140, 106], [150, 106], [160, 105], [172, 99], [184, 97], [196, 95]];
let sampleWave = 'M3 44';
peaks.forEach((p, i) => {
    sampleWave += `L${dips[i].join(' ')}L${p.join(' ')}`;
});
for (let px = 206; px < 582; px += 4) sampleWave += `L${px} ${(91 + Math.sin(px * 1.7) + Math.sin(px / 30)).toFixed(1)}`;

const sampleKnobs = [
    { name: 'Fade In', value: '0.10 ms', angle: -172 },
    { name: 'Fade Out', value: '157 ms', angle: -62 },
    { name: 'Transp', value: '0 st', angle: -36, plain: true },
    { name: 'Vol < Vel', value: '45 %', angle: -56 },
    { name: 'Volume', value: '-12.0 dB', angle: -90 }
];

const eqKnobs = [
    { name: 'Low', value: '4.8 dB', angle: 46 },
    { name: 'Mid', value: '-2.1 dB', angle: -26 },
    { name: 'High', value: '1.9 dB', angle: 18 },
    { name: 'Output', value: '0.0 dB', angle: 0, plain: true }
];

let clipDots = '';
for (let i = 0; i < 8; i++) clipDots += box(26 + i * 50, 6, 5, 2) + box(2 + i * 50, 14, 5, 2) + box(2 + i * 50, 26, 6, 2) + (i % 2 ? box(2 + i * 50, 22, 5, 2) : '');

const swapIcon = 'M4 12a7 7 0 0 1 7-7M18 10a7 7 0 0 1-7 7';
const swapArrows = 'M0 11h8l-4 5zM14 11h8l-4-5z';
const saveIcon = 'M4 4h12l3 3v12H4zM8 5v5h7V5z';
</script>

<style>
body {
    background: #576867;
}
</style>

<style scoped>
.live,
.live * {
    box-sizing: border-box;
}

.live {
    min-height: 100vh;
    display: flex;
    flex-direction: column;
    overflow: hidden;
    background: #576867;
    color: #000;
    font-family: Inter, "Liberation Sans", sans-serif;
    font-size: 19px;
    line-height: 22px;
}

button,
input,
select {
    margin: 0;
    padding: 0;
    border: 0;
    border-radius: 0;
    font: inherit;
    color: inherit;
    background: none;
    appearance: none;
    outline: none;
    min-width: 0;
}

button {
    display: flex;
    align-items: center;
    justify-content: center;
    flex-shrink: 0;
}

svg {
    display: block;
    flex-shrink: 0;
    overflow: visible;
}

h2,
p {
    margin: 0;
    font-size: inherit;
}

.ln {
    fill: none;
    stroke: #000;
    stroke-width: 2;
}

.lit {
    background: #ffa414;
}

.push {
    flex: 1;
}

/* toolbar */
.toolbar {
    display: grid;
    grid-template-columns: auto 418fr auto 654fr auto;
    padding: 18px 18px 18px 16px;
}

.group {
    display: flex;
    gap: 4px;
}

.transport {
    grid-column: 3;
}

.status-group {
    grid-column: 5;
}

.tb {
    height: 34px;
    width: 86px;
    background: #98abaa;
    text-align: center;
}

.tb.on {
    background: #ffa414;
}

.tb.dim {
    color: #465958;
    fill: #465958;
}

.tb.dim .ln {
    stroke: #465958;
}

.tb.tap {
    width: 52px;
}

.tb.tempo,
.tb.signature {
    width: 84px;
}

.tb.nudge {
    width: 34px;
}

.tb.metronome {
    width: 80px;
}

.tb.quantize {
    width: 90px;
    padding-left: 8px;
    text-align: left;
    background: linear-gradient(to bottom right, #000 50%, transparent 50%) no-repeat 79px 14px / 5px 7px, linear-gradient(to bottom left, #000 50%, transparent 50%) no-repeat 74px 14px / 5px 7px, #98abaa;
}

.tb.wide {
    width: 42px;
}

.tb.position {
    width: 164px;
    padding-right: 8px;
    text-align: right;
}

.tb.loop-start {
    margin-left: 42px;
}

.play-buttons {
    display: flex;
    margin: 0 26px;
}

.play-buttons button {
    width: 46px;
}

.tb.key {
    width: 52px;
}

.tb.midi {
    width: 56px;
}

.tb.cpu {
    width: 116px;
    justify-content: flex-start;
    padding-left: 2px;
}

.load {
    width: 20px;
    height: 30px;
    margin-right: 3px;
    background: linear-gradient(90deg, #ffa414 50%, #ff8a14 50%);
}

.caret {
    margin-left: auto;
    margin-right: 6px;
    border: 5px solid transparent;
    border-top: 7px solid #000;
    border-bottom: 0;
}

.tb.disk {
    width: 60px;
}

.split {
    display: flex;
    flex-direction: column;
    gap: 2px;
    width: 16px;
}

.split i {
    flex: 1;
    background: #98abaa;
}

/* arrangement */
.arrange {
    flex: 1;
    display: flex;
    padding-right: 16px;
}

.side {
    width: 62px;
    padding-left: 16px;
    display: flex;
    flex-direction: column;
    justify-content: space-between;
}

.disc {
    width: 38px;
    height: 38px;
    border-radius: 50%;
    background: #374344;
}

.panel {
    flex: 1;
    min-width: 0;
    display: flex;
    flex-direction: column;
    padding-left: 8px;
    border-radius: 8px 8px 0 8px;
    background: #2a3537;
}

.overview-row {
    display: flex;
    gap: 10px;
    padding: 8px 14px 0 0;
}

.overview {
    flex: 1;
    position: relative;
    height: 32px;
    padding: 4px 2px 4px 0;
}

.overview svg {
    width: 100%;
    height: 24px;
    background: #788e8c;
}

.viewport {
    position: absolute;
    left: 62%;
    right: 0;
    top: 0;
    bottom: 0;
    border: 4px solid #000;
}

.zoom-btn {
    width: 34px;
    height: 22px;
    margin-top: 4px;
    background: #a6b7b5;
}

.ruler-row {
    display: flex;
    height: 120px;
}

.rulers {
    flex: 1;
    min-width: 0;
}

.bars {
    position: relative;
    height: 58px;
    border-bottom: 2px solid #374344;
    color: #98abaa;
}

.bar-no {
    position: absolute;
    top: 44px;
    height: 12px;
    padding-left: 8px;
    border-left: 2px solid #6d8280;
    line-height: 4px;
}

.bar-tick {
    position: absolute;
    bottom: 0;
    width: 2px;
    height: 2px;
    background: #6d8280;
}

.locators {
    position: relative;
    height: 48px;
    background: #788e8c;
}

.fill {
    position: absolute;
    left: 0;
    top: 0;
    width: 100%;
    height: 100%;
    overflow: hidden;
}

.locator {
    position: absolute;
    left: 0;
    bottom: 0;
    width: 44px;
    overflow: hidden;
    display: flex;
    justify-content: flex-end;
    background: #8a9d9b;
    font-size: 18px;
}

.scrub {
    position: relative;
    height: 14px;
    background: #374344;
}

.loop-flag {
    position: absolute;
    bottom: 0;
    width: 0;
    border-top: 8px solid #b9f4f5;
}

.loop-flag.start {
    border-left: 6px solid transparent;
    margin-left: -5px;
}

.loop-flag.end {
    border-right: 6px solid transparent;
}

.set-box {
    width: 584px;
    padding: 56px 0 0 10px;
}

.set {
    width: 56px;
    height: 22px;
    border-radius: 11px;
    background: #a6b7b5;
}

.set-row {
    display: flex;
    margin-top: 8px;
    gap: 12px;
}

.mini-disc {
    width: 22px;
    height: 22px;
    border-radius: 50%;
    background: #a6b7b5;
}

.set-tool {
    width: 42px;
    height: 22px;
    background: #a6b7b5;
}

.set-tool.cyan {
    margin-left: 14px;
    background: #71ffe8;
}

.tracks {
    flex: 1;
    position: relative;
    display: flex;
    flex-direction: column;
    gap: 4px;
    margin-right: 8px;
    background: #374344;
}

.track {
    display: flex;
    gap: 4px;
    height: 70px;
}

.track.tall {
    height: 274px;
}

.track.cut {
    height: 42px;
    overflow: hidden;
    margin-bottom: 2px;
}

.track.return {
    height: 34px;
}

.track.master {
    flex: 1;
    min-height: 206px;
}

.lane {
    flex: 1;
    min-width: 0;
    position: relative;
    background: #788e8c;
    overflow: hidden;
}

.tall .lane,
.tall .io,
.tall .mix {
    background: #98abaa;
}

.fold-line {
    position: absolute;
    left: 0;
    right: 0;
    top: 32px;
    height: 2px;
    background: rgba(0, 20, 20, 0.25);
}

.clip {
    position: absolute;
    top: 0;
    bottom: 0;
}

.clip-head {
    position: relative;
    z-index: 2;
    height: 34px;
    padding-left: 4px;
    border: 2px solid;
    border-width: 2px 0 2px 1px;
    font-size: 20px;
    line-height: 32px;
    white-space: nowrap;
    overflow: hidden;
    color: #081010;
}

.clip-body {
    position: absolute;
    top: 34px;
    left: 0;
    right: 0;
    bottom: 0;
}

.clip-body.selected {
    background: linear-gradient(90deg, #89b7c2 66.6%, #98c9d1 66.6%);
}

.lines {
    z-index: 1;
}

.fill.ticks {
    z-index: 3;
    height: 34px;
}

.art {
    position: absolute;
    z-index: 3;
    top: 34px;
    left: 0;
    width: 100%;
    height: 36px;
}

.art.tall {
    height: 240px;
}

.automation {
    position: absolute;
    z-index: 4;
    left: 0;
    right: 0;
    height: 4px;
    background: #ff3347;
}

.automation.dashed {
    left: 4px;
    background: repeating-linear-gradient(90deg, #ff3347 0 8px, transparent 8px 12px);
    opacity: 0.72;
}

.loop-edge {
    position: absolute;
    z-index: 4;
    top: 0;
    height: 2px;
    background: #b9f4f5;
}

.grid-size {
    position: absolute;
    right: 2px;
    bottom: 2px;
    font-size: 38px;
    line-height: 34px;
    color: #3f5150;
}

.playhead,
.playhead-gap {
    position: absolute;
    z-index: 5;
    top: 0;
    bottom: 0;
    width: 2px;
    background: #000;
}

/* shows only between the lanes, which cover the rest */
.playhead-gap {
    z-index: 0;
    background: #fff;
}

.head {
    width: 186px;
    display: flex;
    flex-direction: column;
    overflow: hidden;
}

.title {
    display: flex;
    align-items: center;
    height: 34px;
    flex-shrink: 0;
    padding-left: 5px;
    gap: 13px;
    border-bottom: 2px solid rgba(0, 20, 20, 0.3);
    font-size: 20px;
    font-weight: 600;
    white-space: nowrap;
    overflow: hidden;
    color: #0a1414;
}

.return .title {
    border-bottom: 0;
}

.pick {
    position: relative;
    height: 26px;
    flex-shrink: 0;
    border: 2px solid #2a3537;
    background: #d5e1de;
}

.pick select {
    display: block;
    width: 100%;
    height: 22px;
    padding: 0 20px 0 3px;
}

.pick::after {
    content: "";
    position: absolute;
    right: 2px;
    top: 5px;
    border: 7px solid transparent;
    border-top: 12px solid #000;
    border-bottom: 0;
}

.head .pick {
    margin: 4px 6px 4px;
}

.head .pick select {
    padding-left: 23px;
    padding-right: 18px;
}

.dot {
    position: absolute;
    left: 5px;
    top: 6px;
    width: 12px;
    height: 12px;
    border: 2px solid #1b1f20;
    border-radius: 50%;
    background: #ff3347;
}

.foot {
    margin-top: auto;
    padding: 0 8px 6px;
    display: flex;
    justify-content: space-between;
}

.foot button {
    width: 22px;
    height: 22px;
    border-radius: 50%;
    background: #a6b7b5;
    box-shadow: inset 0 0 0 2px #2a3537;
}

.foot button:last-child {
    margin-left: auto;
}

.io {
    width: 148px;
    padding: 6px 4px 0;
    display: flex;
    flex-direction: column;
    gap: 8px;
    background: #788e8c;
}

.tall .io,
.return .io,
.master .io {
    padding-top: 4px;
}

.blank {
    height: 26px;
    flex-shrink: 0;
    border: 2px solid #2a3537;
}

.pick.midi select {
    padding-left: 20px;
}

.din {
    position: absolute;
    left: 4px;
    top: 0;
}

.pick.out select {
    padding-left: 20px;
}

.out-meter {
    position: absolute;
    left: 2px;
    top: 2px;
    display: flex;
    gap: 2px;
}

.out-meter i {
    width: 4px;
    height: 18px;
    background: linear-gradient(#0a1414 25%, #7dff14 25%);
}

.monitor {
    display: flex;
    justify-content: space-between;
    flex-shrink: 0;
}

.monitor button,
.sq {
    height: 26px;
    border: 2px solid #2a3537;
    background: #a6b7b5;
}

.monitor .lit,
.sq.lit {
    background: #ffa414;
}

.mon-in {
    width: 34px;
}

.mon-auto {
    width: 54px;
}

.mon-off {
    width: 40px;
}

.mix {
    width: 230px;
    padding: 0 6px;
    display: flex;
    justify-content: space-between;
    background: #788e8c;
}

.controls {
    width: 192px;
    padding-top: 4px;
    display: flex;
    flex-direction: column;
    gap: 8px;
}

.mix-row {
    position: relative;
    display: flex;
    justify-content: space-between;
}

.mix-row.end {
    justify-content: flex-end;
}

.mix-row.sends {
    justify-content: flex-start;
    gap: 6px;
}

.field {
    width: 60px;
    height: 26px;
    border: 2px solid #2a3537;
    background: #d5e1de;
    text-align: center;
}

.field.vol {
    width: 92px;
}

.field.cue {
    background: linear-gradient(90deg, #3568ff 83%, #d5e1de 83%);
}

.vol-dot {
    position: absolute;
    left: 0;
    top: 0;
    width: 12px;
    height: 12px;
    border: 2px solid #1b1f20;
    border-radius: 50%;
    background: #ff3347;
}

.activator {
    width: 92px;
    height: 26px;
    border: 2px solid #2a3537;
    background: #ffa414;
    font-weight: 600;
}

.sq {
    width: 42px;
}

.solo {
    font-weight: 500;
}

.return .solo {
    width: 34px;
}

.sq.post {
    width: 50px;
}

.mix-row .activator + .solo {
    margin-left: auto;
    margin-right: 8px;
}

.meter {
    display: flex;
    gap: 2px;
    padding: 2px 0;
}

.meter span {
    position: relative;
    width: 6px;
    background: linear-gradient(#0a1012 10%, var(--tone) 10% 12%, #0a1012 12%);
}

.level,
.peak {
    position: absolute;
    left: 0;
    right: 0;
    bottom: 0;
    background: linear-gradient(#9aff26, #55ff00);
    box-shadow: 0 -4px 0 #479a12;
}

.level.empty {
    box-shadow: none;
}

.peak {
    height: 2px;
    box-shadow: none;
}

.time-ruler {
    height: 34px;
}

.times {
    position: relative;
    height: 34px;
    margin-right: 584px;
    color: #98abaa;
}

.time {
    position: absolute;
    top: 0;
    height: 14px;
    padding-left: 5px;
    border-left: 2px solid #6d8280;
    line-height: 32px;
}

.time-tick {
    position: absolute;
    top: 0;
    width: 2px;
    height: 4px;
    background: #6d8280;
}

.times .loop-flag {
    bottom: auto;
    top: 2px;
    border-top: 0;
    border-bottom: 6px solid #b9f4f5;
}

.rail {
    width: 46px;
    display: flex;
    flex-direction: column;
    background: #2a3537;
    border-radius: 0 0 8px 0;
}

.views {
    height: 92px;
    padding-left: 8px;
    display: flex;
    flex-direction: column;
    gap: 8px;
    background: #576867;
    border-bottom-left-radius: 6px;
}

.views .disc {
    background: #2a3537;
}

.scroll {
    flex: 1;
    display: flex;
    flex-direction: column;
    justify-content: space-between;
    align-items: center;
    padding: 22px 8px 52px 0;
}

.thumb {
    width: 14px;
    height: 802px;
    margin-left: -2px;
    border-radius: 7px;
    background: #4b5e60;
}

.section-buttons {
    display: flex;
    flex-direction: column;
    gap: 12px;
}

.section-buttons button {
    width: 26px;
    height: 26px;
    border-radius: 50%;
    background: #000;
    color: #4b5e60;
    font-size: 14px;
    font-weight: 600;
}

.section-buttons .lit {
    background: #ffa414;
    color: #2a3537;
}

/* device chain */
.devices {
    display: flex;
    gap: 4px;
    margin: 16px 16px 0;
    padding: 8px 6px 8px 12px;
    height: 392px;
    border-radius: 8px;
    background: #374344;
}

.device {
    display: flex;
    flex-direction: column;
    border-bottom: 4px solid #98abaa;
    background: #788e8c;
}

.device-head {
    display: flex;
    align-items: center;
    gap: 8px;
    height: 34px;
    padding: 0 6px;
    background: #98abaa;
}

.device-head.chosen {
    background: #98c9d1;
}

.device-head h2 {
    font-size: 19px;
    font-weight: 600;
    white-space: nowrap;
}

.device-head .power {
    width: 26px;
    height: 26px;
    border: 2px solid #2a3537;
    border-radius: 50%;
    background: #ffa414;
}

.tool {
    width: 26px;
    height: 26px;
    border: 2px solid #2a3537;
    border-radius: 50%;
    background: #a6b7b5;
}

.pill {
    height: 26px;
    border: 2px solid #2a3537;
}

.rand {
    width: 62px;
    margin-left: auto;
    border-radius: 13px;
}

.map {
    width: 50px;
}

.rack {
    width: 962px;
    border-left: 4px solid #98abaa;
    border-radius: 8px 0 0 8px;
}

.rack .device-head {
    padding-left: 4px;
}

.rack .push {
    flex: none;
    width: 426px;
}

.rack-body {
    display: flex;
    flex: 1;
    padding: 8px 14px 0 4px;
}

.rack-side {
    width: 26px;
    height: 320px;
    margin-right: 8px;
    display: flex;
    flex-direction: column;
    gap: 8px;
}

.rack-side .minus {
    margin-top: -4px;
}

.rack-side .auto-select {
    width: 26px;
    height: 26px;
    margin-top: auto;
    border: 2px solid #2a3537;
    background: #ffa414;
}

.macros {
    display: grid;
    grid-template-columns: repeat(4, 100px);
    gap: 4px;
}

.macro {
    height: 160px;
    border: 2px solid #374344;
    border-radius: 8px;
    overflow: hidden;
}

.macro-name {
    height: 56px;
    padding: 5px 4px 0;
    text-align: center;
}

.pale {
    background: #c8d6d3;
}

.mid {
    background: #98abaa;
}

.black {
    background: #212b2d;
    color: #fff;
    font-weight: 600;
    white-space: nowrap;
}

.slate {
    background: #617577;
}

.knob {
    position: relative;
    display: flex;
    flex-direction: column;
    align-items: center;
    white-space: nowrap;
}

.knob input {
    position: absolute;
    width: 48px;
    height: 48px;
    opacity: 0;
}

.track-arc,
.value-arc,
.needle {
    fill: none;
    stroke: #0a0f11;
    stroke-width: 4;
}

.value-arc {
    stroke: #71ffe8;
}

.needle {
    stroke-linecap: round;
}

.knob.big {
    padding-top: 14px;
}

.knob.big span {
    margin-top: -2px;
}

.pad-map {
    position: relative;
    display: grid;
    grid-template-columns: repeat(4, 8px);
    grid-auto-rows: 8px;
    gap: 2px;
    align-content: start;
    margin: 2px 6px 0 14px;
}

.pad-map i {
    background: #98abaa;
}

.pad-map .dark {
    background: #374344;
}

.pad-map .white {
    background: #d5e1de;
}

.pad-map .hot {
    background: #ffa414;
}

.map-frame {
    position: absolute;
    left: -2px;
    top: 188px;
    width: 42px;
    height: 42px;
    border: 2px solid #2a3537;
}

.pads {
    display: grid;
    grid-template-columns: repeat(4, 106px);
    gap: 4px;
    align-content: start;
}

.pad {
    height: 78px;
    border: 2px solid #374344;
    border-radius: 8px;
    overflow: hidden;
}

.pad-name {
    height: 46px;
    padding: 3px 2px;
    line-height: 20px;
    text-align: center;
    white-space: pre;
    background: #d5e1de;
    overflow: hidden;
}

.pad-name.current {
    background: #98c9d1;
}

.pad-row {
    display: grid;
    grid-template-columns: 30px 34px 34px;
    gap: 2px;
    height: 28px;
    border-top: 2px solid #374344;
    background: #374344;
}

.pad-row button {
    background: #788e8c;
    font-weight: 500;
}

.sampler {
    flex: 1;
    min-width: 0;
}

.hand {
    margin-left: -2px;
}

.tab {
    height: 26px;
    width: 104px;
    margin-left: -4px;
    border-radius: 6px;
    background: #788e8c;
}

.tab.front {
    width: 98px;
    height: 30px;
    align-self: flex-end;
    border-radius: 6px 6px 0 0;
}

.sampler-body {
    flex: 1;
    display: flex;
    flex-direction: column;
    padding: 4px 6px 0;
}

.display {
    display: flex;
    height: 258px;
    border-radius: 8px;
    background: #0a0f11;
    overflow: hidden;
}

.modes {
    width: 84px;
    display: flex;
    flex-direction: column;
}

.modes button {
    flex: 1;
    flex-direction: column;
    gap: 8px;
    border-right: 2px solid #788e8c;
    border-bottom: 2px solid #788e8c;
    color: #788e8c;
    font-size: 18px;
}

.modes button:last-child {
    border-bottom: 0;
}

.modes .lit {
    border-right-color: transparent;
    background: none;
    color: #ffa414;
}

.wave-side {
    flex: 1;
    min-width: 0;
    padding: 8px 6px 0 10px;
}

.wave {
    position: relative;
}

.wave svg {
    width: 100%;
    height: 180px;
}

.sample-time {
    position: absolute;
    bottom: 8px;
    color: #a9d4ce;
    opacity: 0.4;
}

.wave-foot {
    display: flex;
    padding: 8px 8px 0 2px;
}

.gain {
    width: 90px;
    color: #788e8c;
    display: flex;
    flex-direction: column;
    gap: 8px;
}

.gain input {
    width: 80px;
    padding-left: 4px;
    color: #71ffe8;
    font-weight: 500;
}

.trigger {
    width: 86px;
    height: 52px;
    margin-top: 2px;
    border: 2px solid #71ffe8;
    font-size: 16px;
    color: #71ffe8;
}

.trigger button {
    width: 100%;
    height: 24px;
}

.trigger .lit {
    background: #71ffe8;
    color: #0a0f11;
}

.snap {
    width: 76px;
    height: 22px;
    margin: 16px 0 0 22px;
    font-size: 16px;
    background: #71ffe8;
}

.warp-box {
    display: grid;
    grid-template-columns: 108px 42px 106px;
    row-gap: 4px;
    color: #788e8c;
    text-align: center;
    align-items: center;
}

.warp {
    height: 22px;
    border: 2px solid #ffa414;
    color: #ffa414;
    font-size: 16px;
}

.round {
    height: 26px;
    border: 2px solid #2f3c3d;
    border-radius: 13px;
}

.beat {
    color: #ffa414;
    font-weight: 500;
}

.halves {
    display: grid;
    grid-template-columns: 50px 50px;
    gap: 4px;
}

.beats {
    padding-left: 4px;
    text-align: left;
    background: linear-gradient(to bottom right, #98abaa 50%, transparent 50%) no-repeat 97px 8px / 6px 8px, linear-gradient(to bottom left, #98abaa 50%, transparent 50%) no-repeat 91px 8px / 6px 8px;
}

.sampler-foot {
    flex: 1;
    display: flex;
    padding-left: 4px;
}

.sampler-foot > * {
    flex-shrink: 0;
}

.check {
    display: flex;
    align-items: center;
    gap: 12px;
    height: 26px;
    margin-top: 8px;
    font-weight: 500;
}

.check input {
    width: 26px;
    height: 26px;
    border: 2px solid #2a3537;
    background: #a6b7b5;
}

.sampler-foot > .check {
    width: 96px;
}

.stack {
    display: flex;
    flex-direction: column;
    gap: 10px;
    margin: 8px 14px 0 0;
}

.sampler-foot select {
    width: 80px;
    height: 26px;
    border: 2px solid #2a3537;
    background: linear-gradient(to bottom right, #000 50%, transparent 50%) no-repeat right 2px top 5px / 7px 12px, linear-gradient(to bottom left, #000 50%, transparent 50%) no-repeat right 9px top 5px / 7px 12px;
}

.knob.small {
    width: 120px;
    padding: 5px 0 0 2px;
    align-items: flex-start;
}

.knob.small svg {
    margin-top: 4px;
}

.knob.small span {
    position: absolute;
    left: 28px;
    bottom: -4px;
}

.knob.small.off {
    color: #131c1c;
    width: 114px;
}

.knob.small:last-child {
    width: 104px;
}

.off .track-arc,
.off .needle {
    stroke: #546766;
}

.rule {
    width: 2px;
    background: #556867;
}

.rule.first {
    margin-left: 105px;
    margin-right: 33px;
}

.rule.second {
    margin: 0 14px 0 37px;
}

.lfo {
    display: grid;
    grid-template-columns: 106px 48px 48px;
    grid-template-rows: 26px 26px;
    column-gap: 8px;
    row-gap: 8px;
    align-content: start;
    margin-top: 10px;
}

.lfo .check {
    margin-top: 0;
    gap: 8px;
}

.lfo select {
    width: 86px;
}

.hz {
    border: 2px solid #2a3537;
    background: #a6b7b5;
    color: #374344;
}

.hz.lit {
    background: #d5e1de;
}

.rate {
    grid-column: 2 / 4;
    border: 2px solid #374344;
}

.eq {
    width: 494px;
}

.eq-body {
    padding: 8px 8px 0;
}

.eq-display {
    position: relative;
    height: 206px;
    border-radius: 8px;
    background: #0a0f11;
}

.eq-graph {
    width: 100%;
}

.eq-text {
    font-size: 18px;
    fill: #667877;
}

.eq-foot {
    display: flex;
    align-items: center;
    gap: 72px;
    height: 42px;
    padding-left: 8px;
    color: #ffa414;
    font-weight: 500;
}

.eq-foot button {
    width: 42px;
    height: 26px;
    border: 2px solid #ffa414;
}

.pointer {
    position: absolute;
    left: 158px;
    bottom: -7px;
    border: 7px solid transparent;
    border-top-color: #0a0f11;
    border-bottom: 0;
}

.eq-knobs {
    display: flex;
    padding: 8px 0 0 16px;
}

.eqk {
    width: 100px;
    padding-top: 4px;
}

.eqk span {
    margin-top: -2px;
}

.eq-knobs .rule {
    margin: 0 23px;
    background: #374344;
}

.eqk svg {
    margin-top: 2px;
}

.stub {
    width: 32px;
    display: flex;
    flex-direction: column;
    border-right: 2px solid #98abaa;
    border-bottom: 4px solid #98abaa;
    border-radius: 0 8px 8px 0;
    background: #788e8c;
    overflow: hidden;
}

.stub i {
    height: 34px;
    background: #98abaa;
}

.chain-meter {
    display: flex;
    gap: 2px;
    align-items: flex-start;
    margin: 148px 2px 0;
}

.chain-meter span {
    width: 4px;
    height: 80px;
    background: linear-gradient(#0a1012 10%, #788e8c 10% 12%, #0a1012 12% 17%, #9aff26 17% 20%, #0a1012 20% 36%, #9aff26 36%, #55ff00);
}

.drop {
    width: 192px;
    display: flex;
    align-items: center;
    padding: 0 24px;
    background: #788e8c;
    line-height: 30px;
    text-align: center;
}

/* status bar */
.status {
    display: flex;
    align-items: center;
    height: 76px;
    padding: 0 16px;
}

.message {
    flex: 1;
    height: 44px;
    margin: 0 16px;
    border: 6px solid #374344;
    border-radius: 6px;
    background: #788e8c;
    line-height: 32px;
    padding-left: 14px;
}

.clip-view {
    width: 412px;
    height: 44px;
    border: 6px solid #374344;
    border-radius: 6px;
}

.clip-view svg {
    width: 100%;
    height: 32px;
}

.track-tab {
    display: flex;
    align-items: center;
    justify-content: space-between;
    width: 382px;
    height: 60px;
    align-self: flex-start;
    margin: 0 16px;
    padding: 16px 6px 0 8px;
    border-radius: 0 0 8px 8px;
    background: #374344;
    font-size: 20px;
    font-weight: 500;
}

.track-tab svg {
    width: 252px;
    height: 40px;
    border: 4px solid #000;
}
</style>
